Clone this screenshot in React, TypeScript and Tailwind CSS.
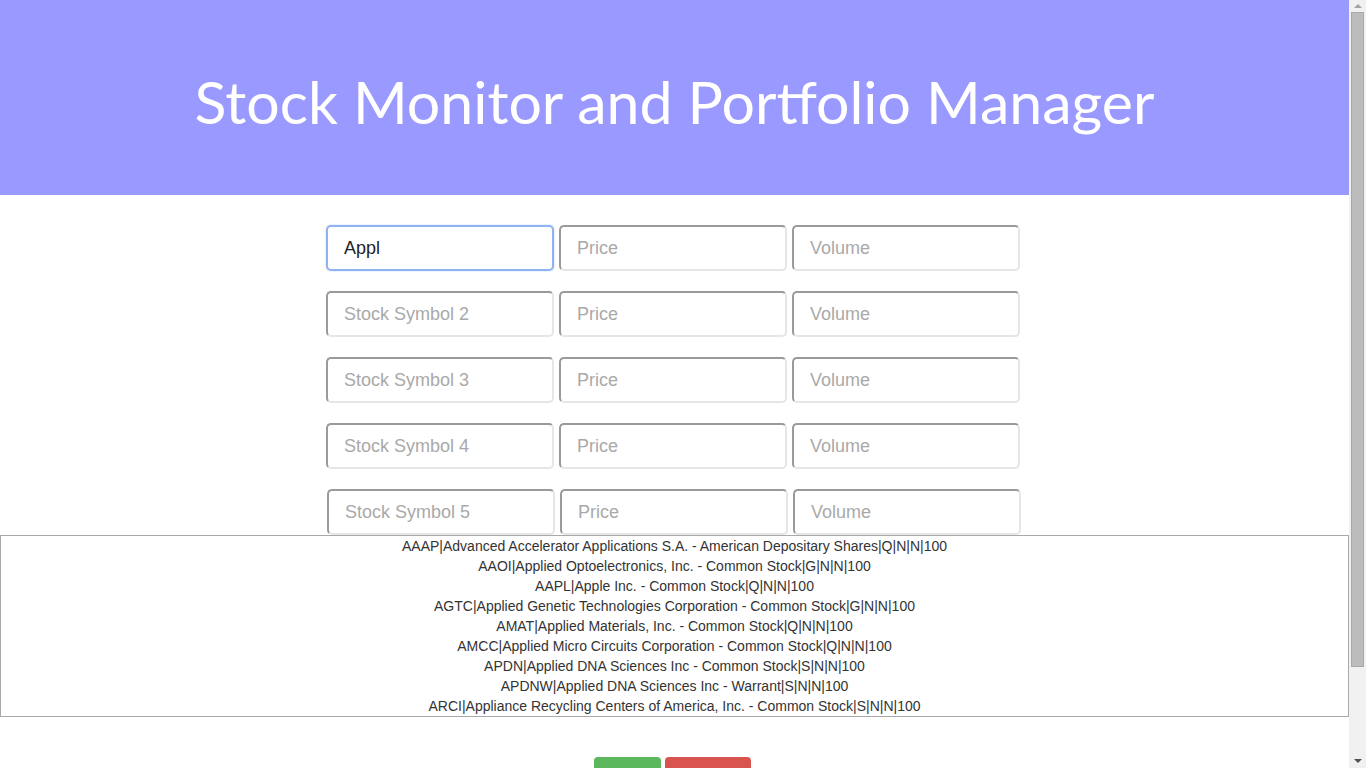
import React from "react";

const rows = [
  { sym: "Appl", ph: "Stock Symbol 1", focused: true },
  { sym: "", ph: "Stock Symbol 2" },
  { sym: "", ph: "Stock Symbol 3" },
  { sym: "", ph: "Stock Symbol 4" },
  { sym: "", ph: "Stock Symbol 5", shift: true },
];

const list = [
  "AAAP|Advanced Accelerator Applications S.A. - American Depositary Shares|Q|N|N|100",
  "AAOI|Applied Optoelectronics, Inc. - Common Stock|G|N|N|100",
  "AAPL|Apple Inc. - Common Stock|Q|N|N|100",
  "AGTC|Applied Genetic Technologies Corporation - Common Stock|G|N|N|100",
  "AMAT|Applied Materials, Inc. - Common Stock|Q|N|N|100",
  "AMCC|Applied Micro Circuits Corporation - Common Stock|Q|N|N|100",
  "APDN|Applied DNA Sciences Inc - Common Stock|S|N|N|100",
  "APDNW|Applied DNA Sciences Inc - Warrant|S|N|N|100",
  "ARCI|Appliance Recycling Centers of America, Inc. - Common Stock|S|N|N|100",
];

function Field({ value, ph, focused }: { value?: string; ph: string; focused?: boolean }) {
  const cls = focused
    ? "border-2 border-[#8fb3ef] shadow-[0_0_2px_#b6cdf5]"
    : "border-2 border-t-[#9a9a9a] border-l-[#9a9a9a] border-b-[#e6e6e6] border-r-[#e6e6e6]";
  return (
    <input
      readOnly
      defaultValue={value}
      placeholder={ph}
      className={`w-[228px] h-[46px] rounded-[5px] bg-white pl-[16px] text-[18px] text-[#222] placeholder-[#a9a9a9] outline-none ${cls}`}
      style={{ fontFamily: '"Liberation Sans", Arial, sans-serif' }}
    />
  );
}

export default function App() {
  return (
    <div className="flex h-screen w-full overflow-hidden bg-white" style={{ fontFamily: '"Liberation Sans", Arial, sans-serif' }}>
      <div className="flex-1 min-w-0">
        <header className="h-[195px] bg-[#9999ff] flex items-center justify-center">
          <h1
            className="text-white text-[59px] leading-none pt-[8px]"
            style={{ fontFamily: 'Lato, "Open Sans", sans-serif', fontWeight: 400 }}
          >
            Stock Monitor and Portfolio Manager
          </h1>
        </header>
        <div className="pt-[30px] flex flex-col gap-[20px]">
          {rows.map((r, i) => (
            <div key={i} className={`flex justify-center gap-[5px] ${r.shift ? "pr-[1px]" : "pr-[3px]"}`}>
              <Field value={r.sym} ph={r.ph} focused={r.focused} />
              <Field ph="Price" />
              <Field ph="Volume" />
            </div>
          ))}
        </div>
        <div className="border border-[#a9a9a9] h-[182px] text-center text-[14px] leading-[20px] text-[#333]">
          {list.map((l) => (
            <div key={l}>{l}</div>
          ))}
        </div>
        <div className="flex justify-center gap-[4px] pt-[40px] pr-[5px]">
          <button aria-label="Add" className="w-[67px] h-[34px] rounded-[4px] bg-[#5cb85c]" />
          <button aria-label="Clear" className="w-[86px] h-[34px] rounded-[4px] bg-[#d9534f]" />
        </div>
      </div>
      <div className="w-[17px] h-full bg-[#f1f1f1] flex flex-col items-center shrink-0">
        <div className="h-[12px] flex items-center justify-center">
          <div className="w-0 h-0 border-l-[4px] border-r-[4px] border-b-[4px] border-l-transparent border-r-transparent border-b-[#a3a3a3]" />
        </div>
        <div className="w-[13px] h-[655px] bg-[#bcbcbc] border border-[#a8a8a8]" />
        <div className="flex-1" />
        <div className="h-[14px] flex items-center justify-center">
          <div className="w-0 h-0 border-l-[4px] border-r-[4px] border-t-[4px] border-l-transparent border-r-transparent border-t-[#505050]" />
        </div>
      </div>
    </div>
  );
}
